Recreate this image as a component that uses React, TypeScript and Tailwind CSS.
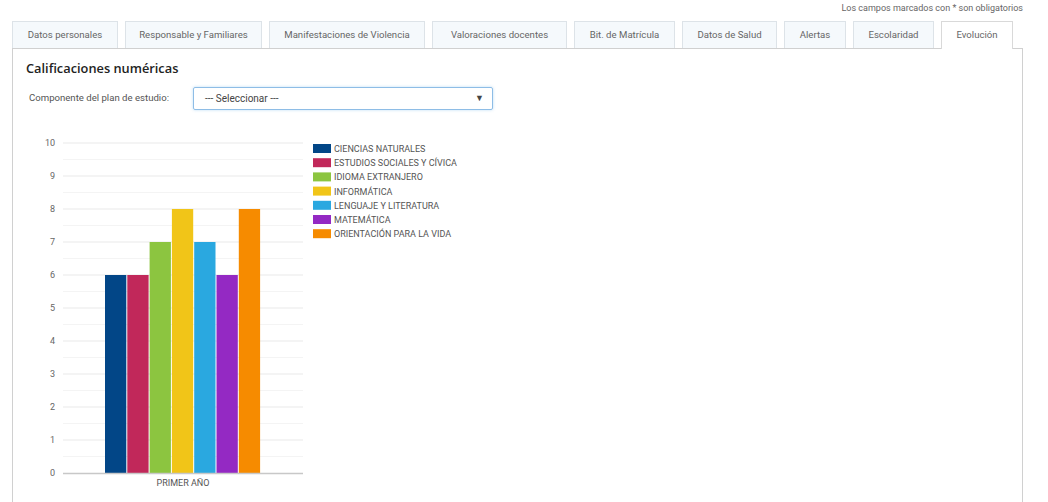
const tabs = [
  { label: "Datos personales", w: "w-[106px]" },
  { label: "Responsable y Familiares", w: "w-[137px]" },
  { label: "Manifestaciones de Violencia", w: "w-[156px]" },
  { label: "Valoraciones docentes", w: "w-[135px]" },
  { label: "Bit. de Matrícula", w: "w-[101px]" },
  { label: "Datos de Salud", w: "w-[95px]" },
  { label: "Alertas", w: "w-[62px]" },
  { label: "Escolaridad", w: "w-[81px]" },
  { label: "Evolución", w: "w-[72px]", active: true },
];

const series = [
  { name: "CIENCIAS NATURALES", value: 6, color: "#024687" },
  { name: "ESTUDIOS SOCIALES Y CÍVICA", value: 6, color: "#c1285a" },
  { name: "IDIOMA EXTRANJERO", value: 7, color: "#8cc540" },
  { name: "INFORMÁTICA", value: 8, color: "#f1c518" },
  { name: "LENGUAJE Y LITERATURA", value: 7, color: "#2aa8e0" },
  { name: "MATEMÁTICA", value: 6, color: "#9429c3" },
  { name: "ORIENTACIÓN PARA LA VIDA", value: 8, color: "#f68b00" },
];

const yOf = (v: number) => 352 - 33 * v;

function Chart() {
  const ticks = Array.from({ length: 11 }, (_, i) => i);
  const halves = Array.from({ length: 10 }, (_, i) => i + 0.5);
  return (
    <svg width="470" height="382" className="block" style={{ fontFamily: "Roboto, Arial, sans-serif" }}>
      {halves.map((v) => (
        <line key={`h${v}`} x1="50" x2="290" y1={yOf(v)} y2={yOf(v)} stroke="#f4f4f4" />
      ))}
      {ticks.map((v) => (
        <g key={v}>
          {v > 0 ? <line x1="50" x2="290" y1={yOf(v)} y2={yOf(v)} stroke="#e9e9e9" /> : null}
          <text x="42" y={yOf(v) + 3} textAnchor="end" fontSize="9" fill="#666">
            {v}
          </text>
        </g>
      ))}
      {series.map((s, i) => {
        const x = 92 + i * 22.3;
        return (
          <rect key={s.name} x={x} y={yOf(s.value)} width="21.3" height={33 * s.value} fill={s.color} />
        );
      })}
      <line x1="50" x2="290" y1={352.5} y2={352.5} stroke="#c8c8c8" strokeWidth="1.5" />
      <text x="170" y="365" textAnchor="middle" fontSize="9" fill="#555">
        PRIMER AÑO
      </text>
      {series.map((s, i) => (
        <g key={`l${s.name}`}>
          <rect x="300" y={23 + i * 14.2} width="18" height="9" fill={s.color} />
          <text x="321" y={31 + i * 14.2} fontSize="9" fill="#555">
            {s.name}
          </text>
        </g>
      ))}
    </svg>
  );
}

export default function App() {
  return (
    <div className="h-[502px] overflow-hidden bg-white font-['Roboto',Arial,sans-serif] text-[#555]">
      <div className="flex h-[21px] w-[1023px] justify-end pt-[2px] text-[9px] text-[#666]">
        Los campos marcados con * son obligatorios
      </div>

      <div className="ml-[12px] flex gap-[7px]">
        {tabs.map((t) =>
          t.active ? (
            <div
              key={t.label}
              className={`${t.w} relative z-10 -mb-px flex h-[28px] items-center justify-center border border-b-0 border-[#d9d9d9] bg-white text-[9.6px] text-[#666]`}
            >
              {t.label}
            </div>
          ) : (
            <div
              key={t.label}
              className={`${t.w} flex h-[27px] items-center justify-center border border-b-0 border-[#dde3e8] bg-[#f5f9fc] text-[9.6px] text-[#666]`}
            >
              {t.label}
            </div>
          ),
        )}
      </div>

      <div className="ml-[12px] h-[460px] w-[1011px] border border-[#d0d0d0] px-[13px] pt-[9px]">
        <h2 className="font-['Open_Sans',Arial,sans-serif] text-[12.8px] font-semibold leading-[20px] text-[#222]">
          Calificaciones numéricas
        </h2>
        <div className="mt-[9px] flex items-center pl-[3px]">
          <span className="w-[164px] text-[9.6px] text-[#555]">Componente del plan de estudio:</span>
          <div className="flex h-[23px] w-[300px] items-center justify-between rounded-[2px] border border-[#8ebde6] pl-[11px] pr-[8px] text-[10px] text-[#444] shadow-[0_0_3px_rgba(102,175,233,0.45)]">
            <span>--- Seleccionar ---</span>
            <span className="text-[9px] text-[#444]">▼</span>
          </div>
        </div>
        <div className="-ml-[13px] mt-[11px]">
          <Chart />
        </div>
      </div>
    </div>
  );
}
